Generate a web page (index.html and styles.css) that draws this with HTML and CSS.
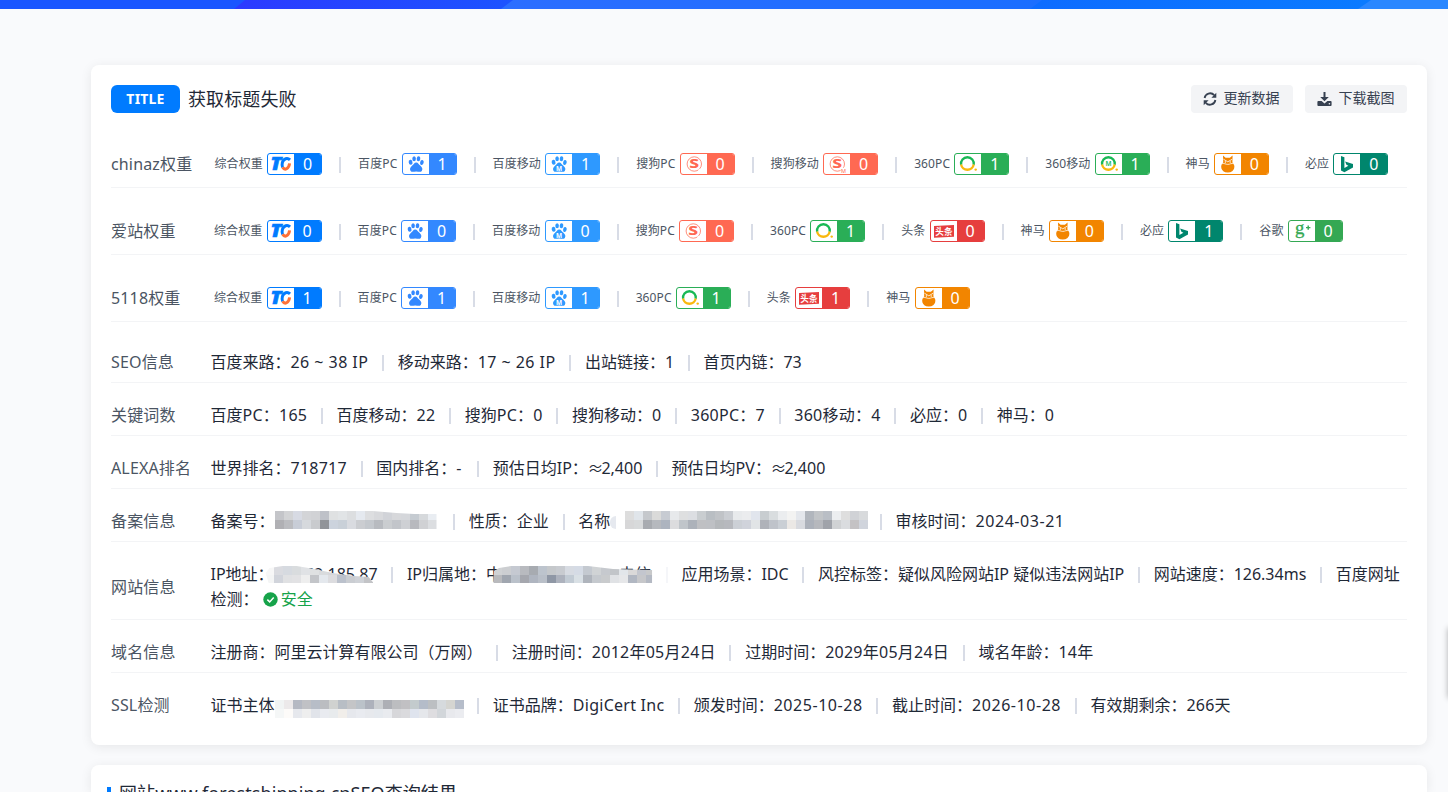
FILE: index.html
```html
<!DOCTYPE html>
<html lang="zh-CN">
<head>
    <meta charset="UTF-8">
    <meta name="viewport" content="width=device-width, initial-scale=1.0">
    <title>SEO查询</title>
    <link rel="stylesheet" href="styles.css">
</head>
<body>
    <!-- icon set, 26x20 each -->
    <svg class="defs">
        <symbol id="tc" viewBox="0 0 26 20">
            <text x="2.6" y="15.8" font-size="17" font-weight="900" font-style="italic" fill="#007bff" stroke="#007bff" stroke-width=".7" textLength="11" lengthAdjust="spacingAndGlyphs">T</text>
            <path d="M22 5.9C19.5 3.4 15.6 4.4 14.4 8.4C13.8 10.8 14 12.2 14.6 13.4" fill="none" stroke="#007bff" stroke-width="3"/>
            <path d="M14.6 13.2C16.8 16.8 20.8 15 21.6 9.4" fill="none" stroke="#ff7136" stroke-width="3"/>
        </symbol>
        <symbol id="paw" viewBox="0 0 26 20">
            <ellipse cx="7.6" cy="8.3" rx="1.9" ry="2.5" transform="rotate(-12 7.6 8.3)"/>
            <ellipse cx="11.1" cy="4.7" rx="1.8" ry="2.5"/>
            <ellipse cx="15.5" cy="4.7" rx="1.8" ry="2.5" transform="rotate(8 15.5 4.7)"/>
            <ellipse cx="18.9" cy="8.5" rx="1.8" ry="2.5" transform="rotate(12 18.9 8.5)"/>
            <path d="M13.2 8.4C15.2 8.4 15.8 10.4 17.2 11.6C19.4 13.5 19.9 15.2 18.8 16.9C17.6 18.6 15.4 17.4 13.2 17.4S8.8 18.6 7.6 16.9C6.5 15.2 7 13.5 9.2 11.6C10.6 10.4 11.2 8.4 13.2 8.4Z"/>
        </symbol>
        <symbol id="pawm" viewBox="0 0 26 20">
            <use href="#paw" width="26" height="20"/>
            <text x="13.2" y="17" font-size="6.5" font-weight="700" text-anchor="middle" fill="#fff">M</text>
        </symbol>
        <symbol id="sogou" viewBox="0 0 26 20">
            <circle cx="13.3" cy="10" r="7.2" fill="none" stroke="currentColor" stroke-width="1" opacity=".75"/>
            <text x="13.3" y="14.4" font-size="12.5" font-weight="800" text-anchor="middle" textLength="10" lengthAdjust="spacingAndGlyphs">S</text>
            <path d="M17.5 16.8L19.4 15.2" stroke="#fff" stroke-width="2"/>
        </symbol>
        <symbol id="sogoum" viewBox="0 0 26 20">
            <use href="#sogou" width="26" height="20"/>
            <path d="M16.6 13.8H23V19.4H16.6Z" fill="#fff"/>
            <text x="19.5" y="18.6" font-size="5.5" text-anchor="middle">M</text>
        </symbol>
        <symbol id="so" viewBox="0 0 26 20">
            <path d="M6.1 10.8A6.4 6.4 0 1 1 18.7 10.8" fill="none" stroke="#19b955" stroke-width="2.3"/>
            <path d="M6.1 10.5A6.4 6.4 0 0 0 18.7 10.5" fill="none" stroke="#f9b80e" stroke-width="2.3"/>
            <circle cx="20.7" cy="15.6" r="1.2" fill="#f9b80e"/>
        </symbol>
        <symbol id="som" viewBox="0 0 26 20">
            <use href="#so" width="26" height="20"/>
            <text x="12.5" y="11.9" font-size="6.5" font-weight="600" text-anchor="middle" fill="#19b955">M</text>
        </symbol>
        <symbol id="toutiao" viewBox="0 0 26 20">
            <path d="M3 5L23 4V15.8L3 16.8Z"/>
            <text x="13" y="13.6" font-size="8.6" font-weight="700" text-anchor="middle" fill="#fff">头条</text>
        </symbol>
        <symbol id="shenma" viewBox="0 0 26 20">
            <path d="M8 1.6L10.6 3.8H14.9L17.6 1.6L17.4 8.6C20.6 10.6 20.6 18.6 12.8 18.6S5 10.6 8.2 8.6Z"/>
            <path d="M8.4 5.2L12.8 7.8L17.2 5.2" fill="none" stroke="#fff" stroke-width=".8"/>
            <path d="M6.4 9.8C9.4 8.8 10.4 10.4 12.8 10.4S16.2 8.8 19.2 9.8" fill="none" stroke="#fff" stroke-width=".8"/>
            <circle cx="10.4" cy="8" r=".7" fill="#fff"/>
            <circle cx="15.2" cy="8" r=".7" fill="#fff"/>
        </symbol>
        <symbol id="bing" viewBox="0 0 26 20">
            <path d="M7 2L10.4 3.2V14.1L14.4 11.8L12.4 10.8L11.1 7.5L19 10.1V13.6L10.4 18.2L7 16.4Z"/>
        </symbol>
        <symbol id="google" viewBox="0 0 26 20">
            <text x="6" y="13.4" font-size="18" font-family="Liberation Serif, serif" stroke="currentColor" stroke-width=".3" textLength="9.5" lengthAdjust="spacingAndGlyphs">g</text>
            <path d="M17 6.6H21.4M19.2 4.4V8.8" stroke="currentColor" stroke-width="1.4"/>
        </symbol>
    </svg>

    <div class="banner">
        <svg width="1448" height="9" viewBox="0 0 1448 9">
            <defs>
                <linearGradient id="g1"><stop offset="0" stop-color="#2c3aff"/><stop offset="1" stop-color="#1c54ff"/></linearGradient>
                <linearGradient id="g2"><stop offset="0" stop-color="#2c6eff"/><stop offset="1" stop-color="#1a6eff"/></linearGradient>
                <linearGradient id="g3"><stop offset="0" stop-color="#0d6cff"/><stop offset="1" stop-color="#0a7bff"/></linearGradient>
            </defs>
            <path d="M0 0H1448V9H0Z" fill="#1a56ff"/>
            <path d="M245 0H520V9H234Z" fill="url(#g1)"/>
            <path d="M513 0H1050V9H501Z" fill="url(#g2)"/>
            <path d="M1042 0H1380V9H1030Z" fill="url(#g3)"/>
            <path d="M1371 0H1448V9H1358Z" fill="#2a87ff"/>
        </svg>
    </div>

    <div class="card">
        <div class="head">
            <span class="tag">TITLE</span>
            <h1>获取标题失败</h1>
            <button>
                <svg width="14" height="14" viewBox="0 0 14 14"><path d="M1.6 6A5.5 5.5 0 0 1 11.2 3.2M12.4 8A5.5 5.5 0 0 1 2.8 10.8" fill="none" stroke="currentColor" stroke-width="1.8"/><path d="M13.3 .8V5.7H8.4ZM.7 13.2V8.3H5.6Z"/></svg>
                <span>更新数据</span>
            </button>
            <button>
                <svg width="15" height="14" viewBox="0 0 15 14"><path d="M6.5 0H8.5V5H11.8L7.5 9.3L3.2 5H6.5Z"/><path d="M1.3 9H4.6L7.5 11.4L10.4 9H13.7A1 1 0 0 1 14.6 10V13A1 1 0 0 1 13.7 14H1.3A1 1 0 0 1 .4 13V10A1 1 0 0 1 1.3 9Z"/><circle cx="12.4" cy="11.8" r=".8" fill="#f3f4f6"/></svg>
                <span>下载截图</span>
            </button>
        </div>

        <div class="row weight first">
            <div class="label">chinaz权重</div>
            <div class="ranks">
                <span class="rank">综合权重<b class="badge zh"><svg><use href="#tc"/></svg><em>0</em></b></span><i class="sep"></i>
                <span class="rank">百度PC<b class="badge bd"><svg><use href="#paw"/></svg><em>1</em></b></span><i class="sep"></i>
                <span class="rank">百度移动<b class="badge bdm"><svg><use href="#pawm"/></svg><em>1</em></b></span><i class="sep"></i>
                <span class="rank">搜狗PC<b class="badge sg"><svg><use href="#sogou"/></svg><em>0</em></b></span><i class="sep"></i>
                <span class="rank">搜狗移动<b class="badge sg"><svg><use href="#sogoum"/></svg><em>0</em></b></span><i class="sep"></i>
                <span class="rank">360PC<b class="badge so"><svg><use href="#so"/></svg><em>1</em></b></span><i class="sep"></i>
                <span class="rank">360移动<b class="badge so"><svg><use href="#som"/></svg><em>1</em></b></span><i class="sep"></i>
                <span class="rank">神马<b class="badge sm"><svg><use href="#shenma"/></svg><em>0</em></b></span><i class="sep"></i>
                <span class="rank">必应<b class="badge by"><svg><use href="#bing"/></svg><em>0</em></b></span>
            </div>
        </div>
        <div class="row weight">
            <div class="label">爱站权重</div>
            <div class="ranks">
                <span class="rank">综合权重<b class="badge zh"><svg><use href="#tc"/></svg><em>0</em></b></span><i class="sep"></i>
                <span class="rank">百度PC<b class="badge bd"><svg><use href="#paw"/></svg><em>0</em></b></span><i class="sep"></i>
                <span class="rank">百度移动<b class="badge bdm"><svg><use href="#pawm"/></svg><em>0</em></b></span><i class="sep"></i>
                <span class="rank">搜狗PC<b class="badge sg"><svg><use href="#sogou"/></svg><em>0</em></b></span><i class="sep"></i>
                <span class="rank">360PC<b class="badge so"><svg><use href="#so"/></svg><em>1</em></b></span><i class="sep"></i>
                <span class="rank">头条<b class="badge tt"><svg><use href="#toutiao"/></svg><em>0</em></b></span><i class="sep"></i>
                <span class="rank">神马<b class="badge sm"><svg><use href="#shenma"/></svg><em>0</em></b></span><i class="sep"></i>
                <span class="rank">必应<b class="badge by"><svg><use href="#bing"/></svg><em>1</em></b></span><i class="sep"></i>
                <span class="rank">谷歌<b class="badge gg"><svg><use href="#google"/></svg><em>0</em></b></span>
            </div>
        </div>
        <div class="row weight">
            <div class="label">5118权重</div>
            <div class="ranks">
                <span class="rank">综合权重<b class="badge zh"><svg><use href="#tc"/></svg><em>1</em></b></span><i class="sep"></i>
                <span class="rank">百度PC<b class="badge bd"><svg><use href="#paw"/></svg><em>1</em></b></span><i class="sep"></i>
                <span class="rank">百度移动<b class="badge bdm"><svg><use href="#pawm"/></svg><em>1</em></b></span><i class="sep"></i>
                <span class="rank">360PC<b class="badge so"><svg><use href="#so"/></svg><em>1</em></b></span><i class="sep"></i>
                <span class="rank">头条<b class="badge tt"><svg><use href="#toutiao"/></svg><em>1</em></b></span><i class="sep"></i>
                <span class="rank">神马<b class="badge sm"><svg><use href="#shenma"/></svg><em>0</em></b></span>
            </div>
        </div>

        <div class="row seo">
            <div class="label">SEO信息</div>
            <div class="info">百度来路：<span class="wide">26 ~ 38 IP</span> <i class="sep"></i> 移动来路：<span class="wide">17 ~ 26 IP</span> <i class="sep"></i> 出站链接：1 <i class="sep"></i> 首页内链：73</div>
        </div>
        <div class="row">
            <div class="label">关键词数</div>
            <div class="info">百度<span class="num">PC：165</span> <i class="sep"></i> 百度移动：<span class="num">22</span> <i class="sep"></i> 搜狗<span class="num">PC：0</span> <i class="sep"></i> 搜狗移动：<span class="num">0</span> <i class="sep"></i> <span class="num">360PC：7</span> <i class="sep"></i> <span class="num">360移动：4</span> <i class="sep"></i> 必应：<span class="num">0</span> <i class="sep"></i> 神马：0</div>
        </div>
        <div class="row">
            <div class="label">ALEXA排名</div>
            <div class="info">世界排名：<span class="num">718717</span> <i class="sep"></i> 国内排名：<span class="dash">-</span> <i class="sep"></i> 预估日均IP：<span class="about">≈</span>2,400 <i class="sep"></i> 预估日均PV：<span class="about">≈</span>2,400</div>
        </div>
        <div class="row">
            <div class="label">备案信息</div>
            <div class="info">备案号：<span class="mask icp" data-top="c4c5c9 d2d3d5 d7dae3 d3d4d7 d1d2d5 bec1c8 dfe1e2 e1e4e6 dcdee0 e5e9ef dddee0 d8d9dc d1d3d8 d7d8db d5d7db c5cbd1 d6d9dc e9edf2" data-bottom="b0b0b4 bbbcc0 c8cdd7 d6d9dd c9cbce 919499 ccd3dd c9d0d8 d9dbe0 cbcdd1 c4c8cd b8bbc0 cacdd0 c2c5ca ced0d4 b8b9be d0d1d4 dcdee1" data-clip="0,0 98,0 122,2 140,3 162,3 162,18 0,18"></span> <i class="sep"></i> 性质：企业 <i class="sep"></i> 名称<span class="smudge"></span><span class="mask name" data-top="dddddd e0e5ea c5c8cc dadad9 c7cbd2 e7e9eb dedfe0 dcdee2 c9cdd0 b9bec3 c0c3c7 cacdd2 e8eaec ebecee e1e5ed c8cdd0 d9dddf ebedef f3f3f2 e4e7ec b1b6bd c1c4c7 b9bec5 eceef0 dedede d0d2d6 d8dadc" data-bottom="d7d7d8 d8dadb a8abb0 b6b9be adb4bf dcdcde c0c5ca adb2ba bfc0c3 bec0c4 b5b8bb b7b9be ccd0d6 d0d3db e1e4e6 afb2b9 bfc3ca cacfd5 ebe8e5 d8dadf acb1ba b6b8bd a0a3aa d0d2d4 dadcdf c4c2c4 d0d4dc"></span> <i class="sep"></i> 审核时间：<span class="date">2024-03-21</span></div>
        </div>
        <div class="row site">
            <div class="label">网站信息</div>
            <div class="info">IP地址：<span class="under ip">52.185.87<span class="mask" data-top="f7f7f7 dadbe0 d6dae0 d9dcde e0e2e5 dfe1e2 d9dbdd d5d7db d4d5d7 d5d7da cfd1d4 c9ccd1" data-bottom="f4f5f5 d1d4db e0e1e3 e2e2e4 eeeeee c3c5c9 e4e8ed dcdcdf bbc1cc cacdd2 cfd2d7 c3c4c7" data-clip="1,7 5,2 18,0 32,0 50,3 68,7 90,10 104,11 109,17 4,17"></span></span> <i class="sep"></i> IP归属地：<span class="under area">中<u>电信</u><span class="mask" data-top="d0d2d4 ccced1 c5c9d1 b8babf a7abb1 bdc4cd c5c8cb c8cbd0 d7dbe2 d5dbe5 c4c9d0 d0d3d5 c6c9ce c2c5c9 e2e6ea dad9d9 c3c6ce c8c9ca d5d9dd" data-bottom="b9babd a0a6af bac1ca a5a7ae afb5c0 b9bfc8 8f97a5 adb2bd c2cbd4 d9e0e5 afb4bc c5c9ce c9cbcd e0e2e5 e6e7e9 b1b7c2 c6c7ca b4b9c3 d3d6da" data-clip="0,16 1,5 6,2 18,0 95,0 120,3 159,4 159,17 1,17"></span></span> <i class="sep faded"></i> 应用场景：IDC <i class="sep"></i> 风控标签：疑似风险网站IP 疑似违法网站IP <i class="sep"></i> 网站速度：126.34ms <i class="sep"></i> 百度网址检测： <span class="safe"><svg width="15" height="15" viewBox="0 0 15 15"><circle cx="7.5" cy="7.5" r="7.2"/><path d="M4.3 7.6L6.7 9.9L10.7 5.6" fill="none" stroke="#fff" stroke-width="1.5"/></svg>安全</span></div>
        </div>
        <div class="row">
            <div class="label">域名信息</div>
            <div class="info">注册商：阿里云计算有限公司（万网） <i class="sep"></i> 注册时间：<span class="num">2012年05月24日</span> <i class="sep"></i> 过期时间：<span class="num">2029年05月24日</span> <i class="sep"></i> 域名年龄：<span class="num">14年</span></div>
        </div>
        <div class="row last">
            <div class="label">SSL检测</div>
            <div class="info">证书主体<span class="mask ssl" data-top="f1f4f4 ece9ea b5b9c3 c0c1c5 b7bdc7 bbbdc1 d0d2d0 b8bec5 c4c5c7 bbc2c9 adb1bb cccfd2 adafb5 bcbdc0 c1c0c3 c3cbcd b4bcc9 bcbfc2 d6dadd d5d5d1 b6bdca" data-bottom="f5f7f7 fdfbf9 e6e8ed eeeeee e1e4ea e9ebf0 e8ebed f1eeea e6e8ed e9ebf0 e7e9ed e5e9ee e9ebef d7d7da dadadd dfe4ee e5e7eb dedde0 d2d6da e8e9ed ebecf0"></span> <i class="sep"></i> 证书品牌：<span class="num">DigiCert Inc</span> <i class="sep"></i> 颁发时间：<span class="date">2025-10-28</span> <i class="sep"></i> 截止时间：<span class="date">2026-10-28</span> <i class="sep"></i> 有效期剩余：<span class="num">266天</span></div>
        </div>
    </div>

    <div class="card result">
        <h2>网站www.forestshipping.cnSEO查询结果</h2>
    </div>
    <div class="side"></div>

    <script>
    // masked values: two rows of 9px blocks
    document.querySelectorAll('.mask').forEach(function(el) {
        var rows = [el.dataset.top.split(' '), el.dataset.bottom.split(' ')];
        var svg = '<svg width="' + rows[0].length * 9 + '" height="18">';
        rows.forEach(function(row, y) {
            row.forEach(function(color, x) {
                svg += '<rect x="' + x * 9 + '" y="' + y * 9 + '" width="9" height="9" fill="#' + color + '"/>';
            });
        });
        el.innerHTML = svg + '</svg>';
        if (el.dataset.clip) {
            el.style.clipPath = 'polygon(' + el.dataset.clip.replace(/(\d+),(\d+)/g, '$1px $2px,').replace(/,$/, '') + ')';
        }
    });
    </script>
</body>
</html>
```

FILE: styles.css
```css
* { box-sizing: border-box; }
body { margin: 0; height: 792px; overflow: hidden; background: #f9fafc; color: #1f2937; font-family: "Noto Sans", "Noto Sans CJK SC", sans-serif; font-size: 16px; }
svg { fill: currentColor; }
.defs { display: none; }
.banner { height: 9px; margin-bottom: 56px; }
.banner svg { display: block; }

.card { width: 1336px; height: 680px; margin: 0 0 20px 91px; padding: 20px; background: #fff; border-radius: 8px; box-shadow: 0 2px 12px rgba(0, 0, 0, .08); }
.head { display: flex; align-items: center; height: 28px; margin-bottom: 8px; }
.tag { width: 69px; height: 28px; line-height: 27px; border-radius: 6px; background: #007bff; color: #fff; font-size: 14px; font-weight: 700; letter-spacing: .2px; text-align: center; }
h1 { flex: 1; margin: 0 0 0 8px; font-size: 18px; font-weight: 400; line-height: 28px; letter-spacing: .1px; }
button { display: flex; align-items: center; gap: 7px; width: 102px; height: 28px; margin-left: 12px; padding: 0 0 0 11.5px; border: none; border-radius: 4px; background: #f3f4f6; color: #374151; font: inherit; font-size: 14px; }
button span { line-height: 20px; margin-bottom: 2px; }

.row { display: flex; align-items: center; padding: 20px 0 8px; border-bottom: 1px solid #f3f4f6; line-height: 24px; }
.label { width: 99.5px; flex: none; color: #4b5563; letter-spacing: .15px; }
.info { flex: 1; }
.row.weight { padding: 31px 0 11px; }
.row.seo { padding-top: 28px; }
.row.site .info { line-height: 24.5px; }
.row.last { border-bottom: none; }

/* latin and digits run a bit wider than the chinese text */
.num { letter-spacing: .25px; }
.date { letter-spacing: .55px; }
.wide { letter-spacing: .45px; }
.dash { letter-spacing: 2px; }
.about { margin: 0 -2px 0 -.5px; }

.sep { display: inline-block; width: 2px; height: 16px; margin: 0 9.5px; background: #d8dce6; vertical-align: -3px; }
.faded { opacity: .25; }
.ranks { display: flex; align-items: center; padding-left: 3.5px; height: 24px; font-size: 12px; color: #4b5563; }
.first .ranks { padding-left: 4px; }
.ranks .sep { margin: 2px 17px 0; }
.rank { display: flex; align-items: center; gap: 4.2px; letter-spacing: .1px; white-space: nowrap; }
.badge { display: flex; width: 55px; height: 22px; overflow: hidden; border: 1px solid; border-radius: 3px; font-weight: 400; }
.badge svg { width: 26px; height: 20px; }
.badge em { flex: 1; background: currentColor; font-size: 16px; font-style: normal; line-height: 20px; text-align: center; }
.badge em::first-letter { color: #fff; }
.zh { color: #007bff; }
.bd { color: #3388ff; }
.bdm { color: #2e99ff; }
.sg { color: #ff6952; }
.so { color: #2aae57; }
.tt { color: #e63e3e; }
.sm { color: #f28500; }
.by { color: #00866d; }
.gg { color: #34a853; }

.mask { display: inline-block; height: 18px; margin-bottom: -2px; }
.mask svg { display: block; }
.icp { margin-right: 3px; }
.name { margin-left: 9px; margin-right: -2px; }
.ssl { margin-bottom: -7px; }
.smudge { display: inline-block; width: 6px; height: 13px; border-radius: 6px 0 0 6px; background: #e6e9ef; vertical-align: -2px; }
.under { position: relative; display: inline-block; height: 24px; vertical-align: top; }
.under .mask { position: absolute; top: 4px; }
.ip { width: 104px; text-align: right; }
.ip .mask { left: -9px; }
.area { width: 166px; }
.area .mask { left: 7px; }
.area u { margin-left: 117px; text-decoration: none; }
.safe { color: #16a34a; }
.safe svg { margin-right: 3px; vertical-align: -2px; }

.result { height: 7px; height: 27px; margin-bottom: 0; padding: 16px 16px 0; border-radius: 8px 8px 0 0; overflow: hidden; }
h2 { margin: 0; padding-left: 12px; font-size: 18px; font-weight: 400; line-height: 24px; letter-spacing: .07px; background: linear-gradient(#007bff, #007bff) 0 6px / 4px 16px no-repeat; }
.side { position: fixed; left: 1448px; top: 628px; width: 40px; height: 70px; box-shadow: 0 0 6px rgba(0, 0, 0, .3); }
```
